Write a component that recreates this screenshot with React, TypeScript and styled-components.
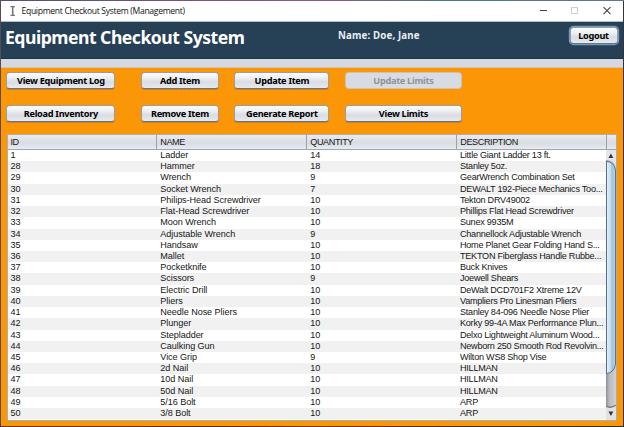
import React from "react";
import styled, { createGlobalStyle } from "styled-components";

const GlobalStyle = createGlobalStyle`
  * { box-sizing: border-box; }
  html, body { margin: 0; padding: 0; overflow: hidden; }
`;

const Frame = styled.div`
  width: 624px;
  height: 427px;
  padding: 1px 1.5px 1.5px 1px;
  background: linear-gradient(90deg, #57506a 0%, #8a5a86 50%, #4f7388 70%, #5a7c90 100%) top / 100% 1px no-repeat,
    linear-gradient(90deg, #5b4a50 0 50%, #30363c 50% 100%) 0 0 / 100% 424px no-repeat,
    linear-gradient(90deg, #5c3a33, #4c3524 35%, #6b3b16 50%, #3a3324 75%, #2e2f25);
  white-space: nowrap;
`;

const Window = styled.div`
  height: 100%;
  display: flex;
  flex-direction: column;
  background: #fb9607;
`;

const TitleBar = styled.div`
  height: 21px;
  flex: none;
  display: flex;
  align-items: center;
  padding: 0 9px 0 8px;
  background: #fff;
  border-bottom: 1px solid #b5bcc5;
`;

const TitleText = styled.div`
  flex: 1;
  margin-left: 5.5px;
  font: 8.6px/20px "Open Sans", sans-serif;
  letter-spacing: -0.32px;
  color: #111;
`;

const WindowControls = styled.svg`
  width: 76px;
  height: 20px;
`;

const Banner = styled.header`
  height: 37px;
  flex: none;
  display: flex;
  align-items: flex-start;
  background: #264056;
  border-bottom: 1px solid #1e3449;
  color: #fff;
  font-family: "Noto Sans", sans-serif;
  font-weight: 700;
`;

const Heading = styled.h1`
  width: 334px;
  margin: 0;
  padding-left: 4px;
  font-size: 17.6px;
  line-height: 31px;
  letter-spacing: -0.5px;
`;

const UserName = styled.div`
  flex: 1;
  padding-left: 3px;
  font-size: 9.7px;
  line-height: 27px;
  letter-spacing: 0.15px;
  color: #e9edf1;
`;

const Strip = styled.div`
  height: 9px;
  flex: none;
  background: #d6d9df;
  border-bottom: 1px solid #d2c5b0;
`;

const Button = styled.button<{ $focus?: boolean }>`
  height: 17px;
  padding: 0;
  border: 1px solid #9a9da3;
  border-bottom-color: #6d747e;
  border-radius: 3.5px;
  background: linear-gradient(#fdfdfe 0%, #eceef1 35%, #d9dce2 60%, #e6e9f0 100%);
  box-shadow: ${(p) => (p.$focus ? "0 0 0 1.2px #7299bd" : "0 1px 0 rgba(110, 95, 75, 0.35)")};
  color: #000;
  font: 700 9.2px/14px "Noto Sans", sans-serif;
  letter-spacing: -0.3px;
  text-align: center;
  &:disabled {
    color: #8f939b;
    border-color: #c9c3b8;
    background: #d8dbe1;
    box-shadow: none;
  }
`;

const LogoutButton = styled(Button)`
  width: 48px;
  margin: 5px 5px 0 0;
`;

const Toolbar = styled.div`
  flex: none;
  height: 66px;
  display: grid;
  grid-template-columns: 119px 78px 95px 117px;
  grid-template-rows: 17px 17px;
  column-gap: 15.5px;
  row-gap: 16px;
  padding: 4px 0 0 5.4px;
  & > :nth-child(4n + 1) { width: 109px; }
`;

const Table = styled.div`
  margin-left: 6px;
  width: 610px;
  height: 287px;
  display: flex;
  flex-direction: column;
  border: 1px solid #a9adb4;
  border-top-color: #b1afa8;
  background: #fff;
  font: 9.1px/11.22px "Liberation Sans", Arial, sans-serif;
  color: #161616;
`;

const HeaderRow = styled.div`
  flex: none;
  height: 15px;
  display: grid;
  grid-template-columns: 149px 150px 150px 150px 9px;
  background: linear-gradient(#e9ebef, #d9dce2 55%, #dfe2e8 80%, #eaedf2);
  border-bottom: 1px solid #9fa5ae;
`;

const HeaderCell = styled.div`
  padding-left: 3.3px;
  line-height: 14px;
  letter-spacing: -0.42px;
  border-right: 1px solid #9da2aa;
  &:first-child { padding-left: 2.5px; }
  &:last-child { border-right: 0; }
`;

const Body = styled.div`
  flex: 1;
  display: flex;
  min-height: 0;
`;

const Rows = styled.div`
  flex: none;
  width: 598px;
`;

const Row = styled.div`
  height: 11.22px;
  display: grid;
  grid-template-columns: 149px 150px 150px 149px;
  line-height: 11px;
  &:nth-child(even) { background: #f1f1f2; }
`;

const Cell = styled.div`
  padding-left: 3.3px;
  letter-spacing: -0.07px;
  &:first-child { padding-left: 2.5px; }
  &:last-child { padding-left: 3px; letter-spacing: -0.25px; }
`;

const Scroll = styled.svg`
  width: 10px;
  height: 270px;
  flex: none;
`;

type Item = [string, string, string, string];

const items: Item[] = [
  ["1", "Ladder", "14", "Little Giant Ladder 13 ft."],
  ["28", "Hammer", "18", "Stanley 5oz."],
  ["29", "Wrench", "9", "GearWrench Combination Set"],
  ["30", "Socket Wrench", "7", "DEWALT 192-Piece Mechanics Too..."],
  ["31", "Philips-Head Screwdriver", "10", "Tekton DRV49002"],
  ["32", "Flat-Head Screwdriver", "10", "Phillips Flat Head Screwdriver"],
  ["33", "Moon Wrench", "10", "Sunex 9935M"],
  ["34", "Adjustable Wrench", "9", "Channellock Adjustable Wrench"],
  ["35", "Handsaw", "10", "Home Planet Gear Folding Hand S..."],
  ["36", "Mallet", "10", "TEKTON Fiberglass Handle Rubbe..."],
  ["37", "Pocketknife", "10", "Buck Knives"],
  ["38", "Scissors", "9", "Joewell Shears"],
  ["39", "Electric Drill", "10", "DeWalt DCD701F2 Xtreme 12V"],
  ["40", "Pliers", "10", "Vampliers Pro Linesman Pliers"],
  ["41", "Needle Nose Pliers", "10", "Stanley 84-096 Needle Nose Plier"],
  ["42", "Plunger", "10", "Korky 99-4A Max Performance Plun..."],
  ["43", "Stepladder", "10", "Delxo Lightweight Aluminum Wood..."],
  ["44", "Caulking Gun", "10", "Newborn 250 Smooth Rod Revolvin..."],
  ["45", "Vice Grip", "9", "Wilton WS8 Shop Vise"],
  ["46", "2d Nail", "10", "HILLMAN"],
  ["47", "10d Nail", "10", "HILLMAN"],
  ["48", "50d Nail", "10", "HILLMAN"],
  ["49", "5/16 Bolt", "10", "ARP"],
  ["50", "3/8 Bolt", "10", "ARP"],
];

const columns = ["ID", "NAME", "QUANTITY", "DESCRIPTION", ""];

const AppIcon = () => (
  <svg width="7" height="12" viewBox="0 0 7 12">
    <path d="M1.500 1.600H6M1.500 10.400H6" stroke="#777" strokeWidth="1.200" />
    <path d="M3.700 1.500V10.500" stroke="#777" strokeWidth="1.600" />
  </svg>
);

const ScrollBar = () => (
  <Scroll viewBox="0 0 10 270">
    <defs>
      <linearGradient id="track"><stop offset="0" stopColor="#8d9096" /><stop offset=".35" stopColor="#b9bbc0" /><stop offset="1" stopColor="#cfd1d6" /></linearGradient>
      <linearGradient id="thumb"><stop offset="0" stopColor="#e6f2fa" /><stop offset=".45" stopColor="#c3dced" /><stop offset=".6" stopColor="#a3c2da" /><stop offset="1" stopColor="#b4d3e8" /></linearGradient>
    </defs>
    <rect width="10" height="270" fill="url(#track)" />
    <path d="M0 0H10V17Q9 10 0 10Z" fill="#e3e5ea" />
    <path d="M0 256Q7 260 10 253V270H0Z" fill="#e0e2e7" />
    <path d="M0 256Q5 259 10 255" fill="none" stroke="#77797e" strokeWidth="1.300" />
    <path d="M.5 11.500Q8 11.500 9.500 20V214Q8 223 .5 223.500Z" fill="url(#thumb)" stroke="#3d5a75" strokeWidth=".8" />
    <path d="M4.900 3.500L7.300 8H2.500Z" fill="#343434" />
    <path d="M2.500 261.500H7.300L4.900 266Z" fill="#343434" />
  </Scroll>
);

export default function App() {
  return (
    <>
      <GlobalStyle />
      <Frame>
        <Window>
          <TitleBar>
            <AppIcon />
            <TitleText>Equipment Checkout System (Management)</TitleText>
            <WindowControls viewBox="0 0 76 20">
              <path d="M2 9.500H9" stroke="#444" />
              <rect x="33.500" y="6.500" width="6" height="6" fill="none" stroke="#d0d0d0" />
              <path d="M65.500 6.200L72.500 13.200M72.500 6.200L65.500 13.200" stroke="#444" strokeWidth="1.100" />
            </WindowControls>
          </TitleBar>
          <Banner>
            <Heading>Equipment Checkout System</Heading>
            <UserName>Name: Doe, Jane</UserName>
            <LogoutButton $focus>Logout</LogoutButton>
          </Banner>
          <Strip />
          <Toolbar>
            <Button>View Equipment Log</Button>
            <Button>Add Item</Button>
            <Button>Update Item</Button>
            <Button disabled>Update Limits</Button>
            <Button>Reload Inventory</Button>
            <Button>Remove Item</Button>
            <Button>Generate Report</Button>
            <Button>View Limits</Button>
          </Toolbar>
          <Table>
            <HeaderRow>
              {columns.map((c) => <HeaderCell key={c}>{c}</HeaderCell>)}
            </HeaderRow>
            <Body>
              <Rows>
                {items.map((item) => (
                  <Row key={item[0]}>
                    {item.map((value, i) => <Cell key={i}>{value}</Cell>)}
                  </Row>
                ))}
              </Rows>
              <ScrollBar />
            </Body>
          </Table>
        </Window>
      </Frame>
    </>
  );
}
